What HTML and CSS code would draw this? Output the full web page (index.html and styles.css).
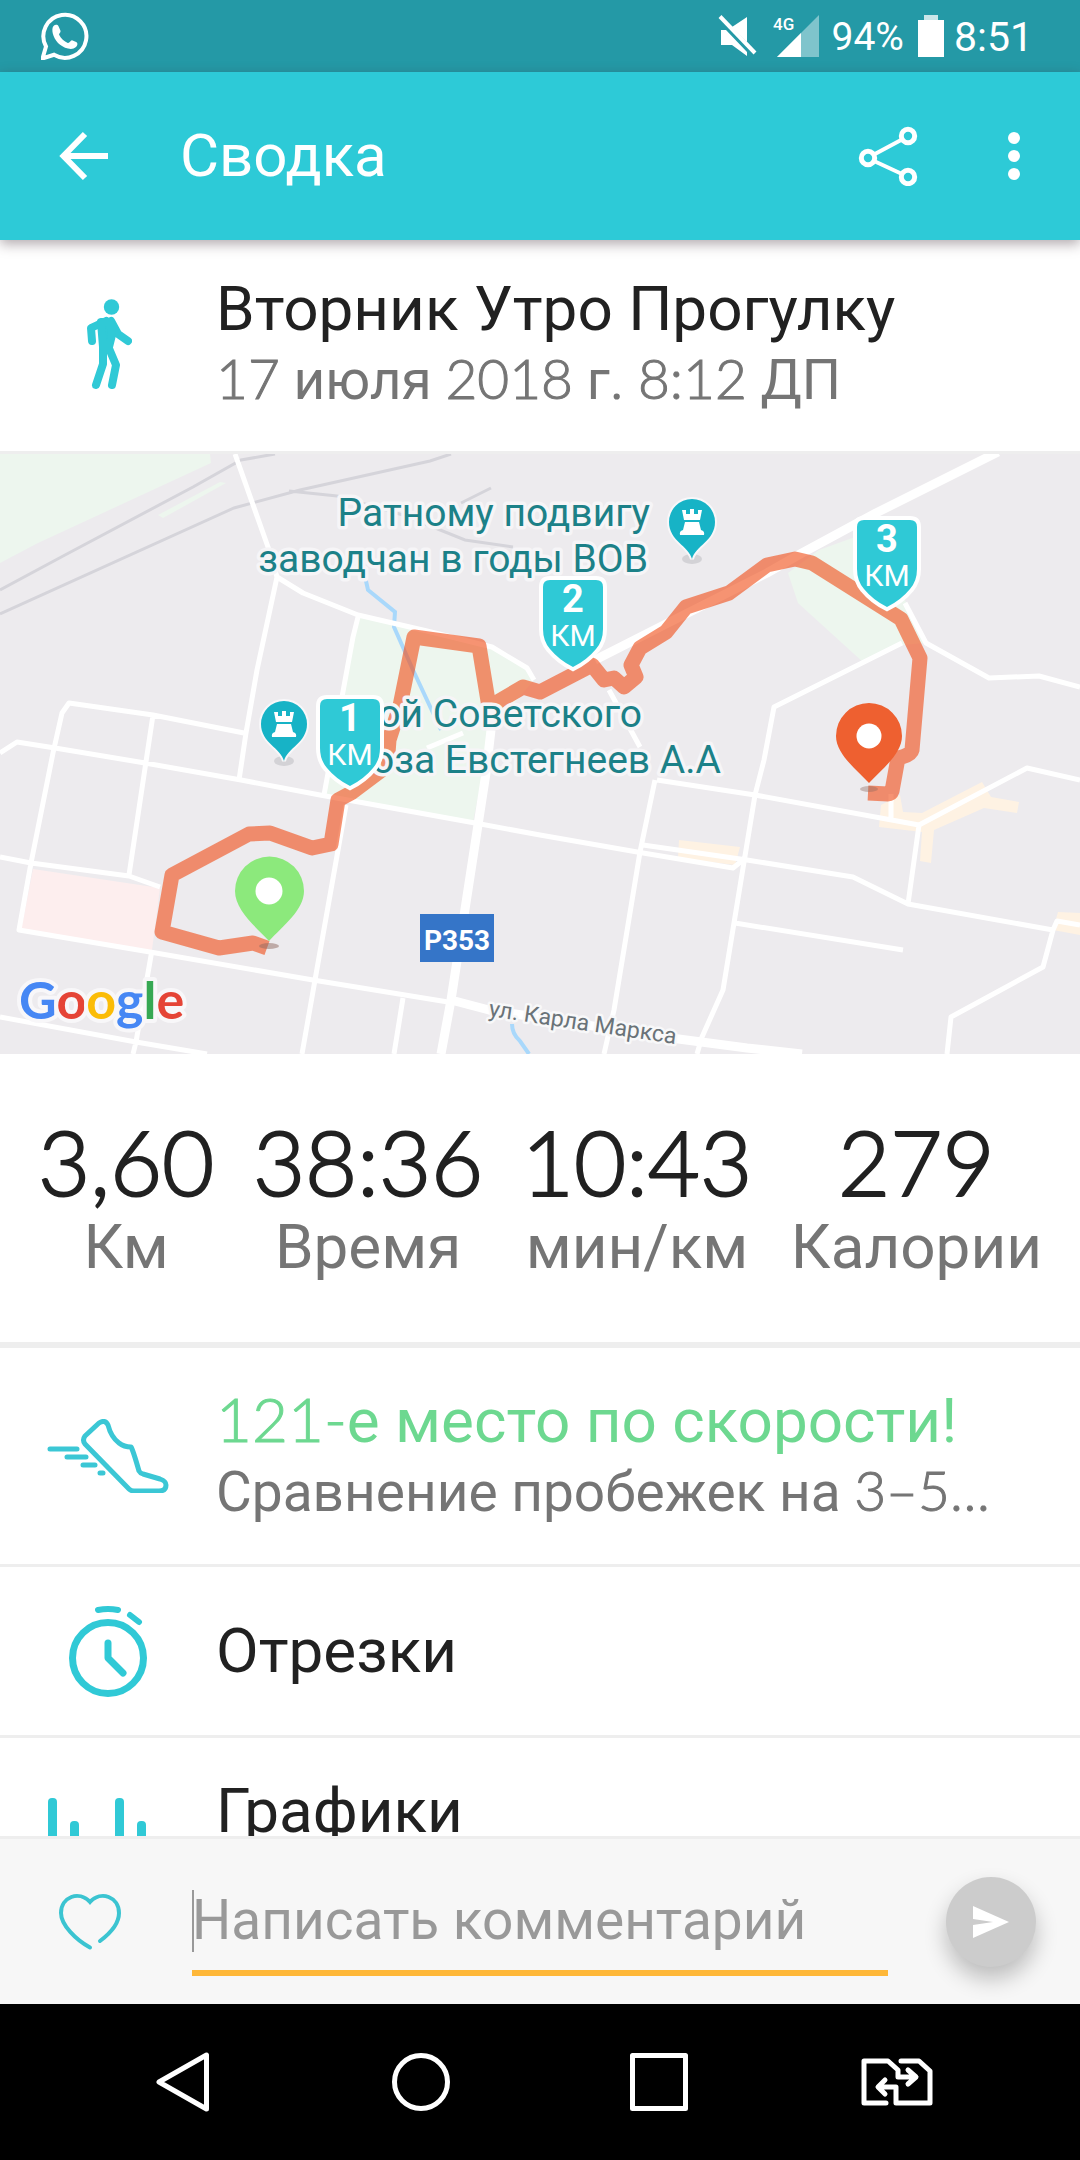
FILE: index.html
```html
<!DOCTYPE html>
<html lang="ru">
<head>
<meta charset="utf-8">
<meta name="viewport" content="width=device-width, initial-scale=1">
<title>Сводка</title>
<link rel="stylesheet" href="styles.css">
</head>
<body>
<div class="status">
  <svg class="status-app" width="48" height="48" viewBox="0 0 48 48" aria-label="WhatsApp"><path d="M1.500 46.500 5 34.500A21.500 21.500 0 1 1 13 42.800Z" fill="none" stroke="#fff" stroke-width="4" stroke-linejoin="miter"/><path d="M12.500 14c1.500-1.500 4-1.700 5 .2l2 4.500c.6 1.600-1.900 3-1.400 4.100 2 4 5 6.600 8.700 8.200 1.600.6 2.600-2.800 4.200-2.700l4.200 1.800c2 1 1.200 3.800-.2 5-2.200 1.900-5 2.400-8 1.500C19 34.500 13.500 28.500 11.800 21.500c-.6-2.800-.8-5.800.7-7.500Z" fill="#fff"/></svg>
  <svg class="status-mute" width="40" height="42" viewBox="0 0 40 42" aria-label="Без звука"><path d="M14 12 29 2v25ZM3 15h5l21 22v4L14 30H3Z" fill="#fff"/><path d="M2 1.500 37 38" stroke="#fff" stroke-width="4"/></svg>
  <svg class="status-signal" width="46" height="42" viewBox="0 0 46 42" aria-label="Сигнал 4G"><path d="M46 0v42H4Z" fill="#7fc4cc"/><path d="M28 18v24H4Z" fill="#fff"/><text x="0" y="15" class="network">4G</text></svg>
  <span class="status-percent">94%</span>
  <svg class="status-battery" width="26" height="42" viewBox="0 0 26 42" aria-label="Батарея"><path d="M6 0h14v5H6Z" fill="#c9e6e9"/><path d="M0 5h26v37H0Z" fill="#fff"/></svg>
  <span class="status-time">8:51</span>
</div>

<header class="appbar">
  <button class="icon-button" aria-label="Назад"><svg width="50" height="50" viewBox="0 0 50 50"><path d="M26 3 4.500 25 26 47M5 25h44" fill="none" stroke="#fff" stroke-width="6"/></svg></button>
  <h1 class="appbar-title">Сводка</h1>
  <button class="icon-button" aria-label="Поделиться"><svg width="60" height="60" viewBox="0 0 60 60" fill="none" stroke="#fff" stroke-width="5"><circle cx="50" cy="10" r="6.700"/><circle cx="10" cy="32" r="6.700"/><circle cx="50" cy="51" r="6.700"/><path stroke-width="4" d="m16 28.500 28-15M16 35l28 13"/></svg></button>
  <button class="icon-button" aria-label="Ещё"><svg width="12" height="48" viewBox="0 0 12 48" fill="#fff"><circle cx="6" cy="6" r="6"/><circle cx="6" cy="24" r="6"/><circle cx="6" cy="42" r="6"/></svg></button>
</header>

<main class="content">
  <section class="row row-activity">
    <div class="row-icon"><svg width="48" height="92" viewBox="0 0 48 92" fill="none" stroke="#30c9d6" stroke-width="8" stroke-linecap="round" stroke-linejoin="round"><circle cx="27.500" cy="9" r="7.700" fill="#30c9d6" stroke="none"/><path d="M8 43 7 30 22 23M27 23l7 13 10 7M19 48v18L12 87M24 48l8 19-4 20"/><path d="M17 24h9l2 13-3 12h-6Z" fill="#30c9d6"/></svg></div>
    <div class="row-text">
      <h2 class="row-title">Вторник Утро Прогулку</h2>
      <p class="row-sub"><span class="num">17</span> июля <span class="num">2018</span> г. <span class="num">8:12</span> ДП</p>
    </div>
  </section>

  <svg class="map" viewBox="0 0 1080 600" preserveAspectRatio="xMidYMid slice" role="img" aria-label="Карта маршрута">
    <defs>
      <g id="shield"><path d="M7 0h46q7 0 7 7v42q0 12-7 20-9 11-23 18Q16 80 7 69 0 61 0 49V7Q0 0 7 0Z" fill="#2fc9d6" stroke="#fff" stroke-width="8" paint-order="stroke"/></g>
      <g id="rook-pin"><ellipse cx="23" cy="60" rx="10" ry="5" fill="#d3d2d6"/><path d="M23 60C20 47 0 42 0 23a23 23 0 0 1 46 0c0 19-20 24-23 37Z" fill="#17b3c6" stroke="#f8f7f9" stroke-width="4" paint-order="stroke"/><path d="M13 11h4v4h4v-5h4v5h4v-4h4l-2 10H15ZM16 23h14l2 8q4 1 3 5H11q-1-4 3-5Z" fill="#fff"/></g>
    </defs>
    <rect width="1080" height="600" fill="#edebee"/>
    <g fill="#edf6ee">
      <path d="M0 0h210l1 9L38 89 0 109ZM220 28l6 1-63 35-5-3ZM358 163l69 14 65 16 35 21 7 12-43 50-18 92-149-27 29-158ZM788 119l31-23 36-13 50 63 19 43-22 2-38 18-66-60Z"/>
    </g>
    <path d="m33 415 127 19-8 62-131-20Z" fill="#fdeeee"/>
    <path d="m679 386 61 7-5 18-57-7ZM879 373l2-22 19-10 3 17 19 1 60-31 9 15 28 5-2 11-33-5-50 22-3 33-11-2 2-29ZM1058 458l22 1v22l-27-5Z" fill="#fef2e3"/>
    <g fill="none" stroke="#d5d4da" stroke-width="3">
      <path d="m0 136 65-35L193 33l48-27 34-6M0 160 234 54l66-18L430 7l21-7M289 37l48 5 66 19 62 25 48 7M461 49l30-15"/>
    </g>
    <path d="m362 109 6 27 27 22-1 15 19 43 28 60M512 570q0 10 8 17l9 13" fill="none" stroke="#a9d8fb" stroke-width="4"/>
    <g fill="none" stroke="#fff" stroke-width="5" stroke-linejoin="round">
      <path d="m235 0 33 93 9 30-20 93-11 63-7 47M277 123l26 16 55 22 69 16 65 16 35 21 7 12M358 163l-5 20-29 158"/>
      <path d="m0 299 17-11 38 6 90 15 96 17 79 15 155 28 65 12 103 18 90 15 10-8M31 409l22-110 9-40 7-10 84 12 91 18M153 261l-24 160M0 403l31 6 98 13 31 11M31 409l-12 67 131 22 163 28 135 22M346 351l-31 175-13 74M152 496l-16 92-3 12M0 563l136 25 71 12M403 544l-9 56M463 279l-36 15"/>
      <path d="m655 326-15 72-26 158-10 44M657 326l98 15 164 30 108-57 53 12M902 189l-128 64-10 53-9 35-32 195-21 47-5 17M905 149l21 40 63 35 50-2 41 11M643 391l104 15 106 17 55 27 145 26 4-9 23 4M919 371l-11 79M735 469l168 27M1053 476l-10 37-92 50-4 37M891 340v26M609 236l31 57"/>
    </g>
    <g fill="none" stroke="#fff" stroke-width="9" stroke-linejoin="round">
      <path d="m998-2-122 61-74 40-35 20-107 54-65 33M491 276l-5 43-35 227-10 54M451 546l38 10 182 28 76 10 55 6"/>
    </g>
    <path d="m267 494-14-5-34 5-57-16 10-57 77-41 21-1 42 15 19-4 7-44 13-7 36-27 2-26 11-34 14-69 65 9 10 61 34-20 17 5 52-27 12 15 10-2 10 9 12-10-5-12 9-17 26-16 20-25 43-14 38-28 28-6 17 4 89 56 19 39-8 92q-1 5-14 8l-6 33q-1 3-4 3l-20-1" fill="none" stroke="#f0511b" stroke-opacity=".62" stroke-width="15" stroke-linejoin="round"/>

    <g class="place">
      <text x="650" y="72" text-anchor="end">Ратному подвигу</text>
      <text x="648" y="118" text-anchor="end">заводчан в годы ВОВ</text>
      <text x="642" y="273" text-anchor="end">ой Советского</text>
      <text x="721" y="319" text-anchor="end">оза Евстегнеев А.А</text>
    </g>
    <text class="street" transform="translate(488 562) rotate(8.500)">ул. Карла Маркса</text>
    <use href="#rook-pin" x="669" y="45"/>
    <use href="#rook-pin" x="261" y="247"/>

    <g class="marker">
      <use href="#shield" x="320" y="245"/><text class="marker-num" x="350" y="277">1</text><text x="350" y="311">КМ</text>
      <use href="#shield" x="543" y="126"/><text class="marker-num" x="573" y="158">2</text><text x="573" y="192">КМ</text>
      <use href="#shield" x="857" y="66"/><text class="marker-num" x="887" y="98">3</text><text x="887" y="132">КМ</text>
    </g>

    <ellipse cx="269" cy="492" rx="10" ry="3" fill="#8f6a60" fill-opacity=".5"/>
    <path d="M269 487c-14-15-34-31-34-50a34 34 0 0 1 69 0c0 19-21 35-35 50Z" fill="#8ce97c"/><circle cx="269" cy="437" r="13.500" fill="#fff"/>
    <ellipse cx="869" cy="335" rx="9" ry="3" fill="#8f6a60" fill-opacity=".4"/>
    <path d="M869 329c-13-14-33-29-33-47a33 33 0 0 1 66 0c0 18-20 33-33 47Z" fill="#ee6030"/><circle cx="869" cy="282" r="12.500" fill="#fff"/>

    <rect x="420" y="460" width="74" height="48" fill="#3575c8"/>
    <text class="route-number" x="457" y="496">Р353</text>
    <text class="google" x="19" y="565"><tspan fill="#4687f4">G</tspan><tspan fill="#e54436">o</tspan><tspan fill="#fbbc07">o</tspan><tspan fill="#4687f4">g</tspan><tspan fill="#36a853">l</tspan><tspan fill="#e54436">e</tspan></text>
  </svg>

  <dl class="stats">
    <div class="stat"><dt>Км</dt><dd>3,60</dd></div>
    <div class="stat"><dt>Время</dt><dd>38:36</dd></div>
    <div class="stat"><dt>мин/км</dt><dd>10:43</dd></div>
    <div class="stat"><dt>Калории</dt><dd>279</dd></div>
  </dl>

  <a class="row" href="#rank">
    <span class="row-icon"><svg width="122" height="74" viewBox="0 0 122 74" fill="none" stroke="#3bc7d5" stroke-width="5" stroke-linecap="round" stroke-linejoin="round"><path d="M52 4q6-4 9 2 3 12 11 18 5 4 12 4 2 3 8 24 1 2 4 3l17 5q6 2 6 6 0 6-7 6H87q-3 0-5-2L38 25q-3-4 0-8ZM3 30h27M20 38h19M36 46h12M53 54h3"/></svg></span>
    <span class="row-text">
      <span class="row-title row-title-rank"><span class="num">121-</span>е место по скорости!</span>
      <span class="row-sub">Сравнение пробежек на <span class="num">3–5…</span></span>
    </span>
  </a>
  <a class="row row-single" href="#splits">
    <span class="row-icon"><svg width="78" height="94" viewBox="0 0 78 94" fill="none" stroke="#30c9d6" stroke-width="7" stroke-linecap="round" stroke-linejoin="round"><circle cx="39" cy="54" r="35.500"/><path d="M39 39v15l15 15" /><path d="M29 6q10-2 20 0M61 11l9 7" stroke-width="6"/></svg></span>
    <span class="row-text"><span class="row-title">Отрезки</span></span>
  </a>
  <a class="row" href="#charts">
    <span class="row-icon"><svg width="120" height="96" viewBox="0 0 120 96" fill="#30c9d6"><rect width="9" height="96" rx="4"/><rect x="22" y="23" width="9" height="73" rx="4"/><rect x="45" y="46" width="9" height="50" rx="4"/><rect x="67" width="9" height="96" rx="4"/><rect x="89" y="23" width="9" height="73" rx="4"/><rect x="111" y="58" width="9" height="38" rx="4"/></svg></span>
    <span class="row-text row-text-tall"><span class="row-title">Графики</span></span>
  </a>
</main>

<form class="comment">
  <button type="button" class="like" aria-label="Нравится"><svg width="64" height="58" viewBox="0 0 64 58" fill="none" stroke="#3bc4d1" stroke-width="4" stroke-linecap="round"><path d="M32 54.500C18 47 3 32 3 20 3 4 21-3 32 9 43-3 61 4 61 20c0 9-7 19-19 28"/></svg></button>
  <div class="field"><span class="caret"></span><input class="comment-input" type="text" placeholder="Написать комментарий" aria-label="Написать комментарий"></div>
  <button type="button" class="send" aria-label="Отправить"><svg width="38" height="34" viewBox="0 0 38 34"><path d="M1 1 37 17 1 33V20l20-3-20-3Z" fill="#fff"/></svg></button>
</form>

<nav class="navbar">
  <button aria-label="Назад"><svg width="58" height="60" viewBox="0 0 58 60"><path d="M52.500 3v54L5 30Z" fill="none" stroke="#fff" stroke-width="5" stroke-linejoin="round"/></svg></button>
  <button aria-label="Домой"><svg width="60" height="60" viewBox="0 0 60 60"><circle cx="30" cy="30" r="26.500" fill="none" stroke="#fff" stroke-width="5"/></svg></button>
  <button aria-label="Недавние"><svg width="60" height="60" viewBox="0 0 60 60"><rect x="3.500" y="3.500" width="53" height="53" fill="none" stroke="#fff" stroke-width="5" stroke-linejoin="round"/></svg></button>
  <button aria-label="Сменить SIM"><svg width="72" height="48" viewBox="0 0 72 48" fill="none" stroke="#fff" stroke-width="5" stroke-linecap="round" stroke-linejoin="round"><path d="M25 45H3V3h24l10 9v7h17M47 12l8 7-8 7M40 3h18l11 10v32H35V29H18M24 22l-7 7 7 7"/></svg></button>
</nav>
</body>
</html>
```
FILE: styles.css
```css
* {
  box-sizing: border-box;
  margin: 0;
  padding: 0;
}

body {
  display: flex;
  flex-direction: column;
  height: 100vh;
  background: #fff;
  color: #212121;
  font-family: Roboto, "Noto Sans", sans-serif;
}

svg {
  display: block;
  flex: none;
}

button {
  display: flex;
  align-items: center;
  justify-content: center;
  border: 0;
  background: none;
}

/* Status bar */
.status {
  display: flex;
  flex: none;
  align-items: center;
  height: 72px;
  padding: 0 47px 0 41px;
  background: #2499a6;
  color: #fff;
}

.status-app {
  margin-right: auto;
}

.status-signal {
  margin: 0 13px 0 15px;
}

.network {
  fill: #fff;
  font-size: 17px;
  font-weight: 500;
}

.status-percent {
  padding-top: 2px;
  font-size: 39px;
}

.status-battery {
  margin: 0 10px 0 14px;
}

.status-time {
  padding-top: 2px;
  font-size: 41px;
}

/* App bar */
.appbar {
  display: flex;
  flex: none;
  align-items: center;
  height: 168px;
  padding: 0 18px 0 12px;
  background: #2dcad7;
  box-shadow: 0 4px 12px rgba(60, 40, 50, 0.4);
  position: relative;
  z-index: 1;
}

.icon-button {
  width: 144px;
  height: 144px;
}

.icon-button:last-child {
  width: 96px;
}

.icon-button:nth-last-child(2) {
  width: 156px;
}

.appbar-title {
  flex: 1;
  padding-left: 24px;
  color: #fff;
  font-size: 60px;
  font-weight: 400;
  line-height: 72px;
}

/* Scrolling content */
.content {
  flex: 1;
  min-height: 0;
  overflow: hidden;
}

.row {
  display: flex;
  align-items: center;
  min-height: 219px;
  border-bottom: 3px solid #eee;
  color: inherit;
  text-decoration: none;
}

.row-activity {
  min-height: 214px;
  padding-bottom: 4px;
}

.row-single {
  min-height: 171px;
}

.row-icon {
  display: flex;
  flex: none;
  justify-content: center;
  width: 216px;
}

.row-text {
  flex: 1;
  min-width: 0;
}

.row-text-tall {
  min-height: 142px;
}

.row-title,
.row-sub {
  display: block;
  white-space: nowrap;
  font-weight: 400;
}

.row-title {
  font-size: 62px;
  line-height: 72px;
}

.row-title-rank {
  color: #6dd890;
}

.row-sub {
  color: #757575;
  font-size: 55px;
  line-height: 70px;
}

.num {
  font-family: Lato, sans-serif;
  font-weight: 300;
  line-height: 1;
  -webkit-text-stroke: 1px currentColor;
}

/* Map */
.map {
  width: 100%;
  height: 600px;
}

.place {
  fill: #1c8188;
  stroke: #f6f5f7;
  stroke-width: 7px;
  stroke-linejoin: round;
  paint-order: stroke;
  font-size: 39px;
}

.street {
  fill: #6a7378;
  stroke: #f8f8f9;
  stroke-width: 5px;
  stroke-linejoin: round;
  paint-order: stroke;
  font-size: 23px;
}

.marker {
  fill: #fff;
  font-size: 30px;
  text-anchor: middle;
}

.marker-num {
  font-size: 38px;
  font-weight: 700;
}

.route-number {
  fill: #fff;
  font-size: 28px;
  font-weight: 700;
  text-anchor: middle;
}

.google {
  stroke: #f8f7f9;
  stroke-width: 8px;
  stroke-linejoin: round;
  paint-order: stroke;
  font-family: Lato, sans-serif;
  font-size: 52px;
  font-weight: 700;
}

/* Totals */
.stats {
  display: flex;
  justify-content: space-between;
  height: 294px;
  padding: 57px 38px 0;
  border-bottom: 6px solid #eee;
}

.stat {
  display: flex;
  flex-direction: column-reverse;
  justify-content: flex-end;
  text-align: center;
}

.stat dt {
  color: #757575;
  font-size: 62px;
  line-height: 72px;
}

.stat dd {
  font-family: Lato, sans-serif;
  font-size: 90px;
  font-weight: 300;
  line-height: 100px;
  -webkit-text-stroke: 2px currentColor;
}

/* Comment bar */
.comment {
  display: flex;
  flex: none;
  align-items: center;
  height: 168px;
  padding-right: 44px;
  border-top: 3px solid #eee;
  background: #f7f7f7;
}

.like {
  width: 180px;
  height: 144px;
}

.field {
  position: relative;
  flex: 1;
  margin: 12px 58px 0 12px;
}

.caret {
  position: absolute;
  top: 10px;
  left: 0;
  width: 2px;
  height: 62px;
  background: #999;
}

.comment-input {
  display: block;
  width: 100%;
  height: 96px;
  padding: 0 0 10px;
  border: 0;
  border-bottom: 6px solid #feb738;
  outline: 0;
  background: none;
  color: #212121;
  font: 55px Roboto, "Noto Sans", sans-serif;
}

.comment-input::placeholder {
  color: #999;
  opacity: 1;
}

.send {
  width: 90px;
  height: 90px;
  border-radius: 50%;
  background: #ccc;
  box-shadow: 0 12px 22px rgba(0, 0, 0, 0.24);
}

/* System navigation */
.navbar {
  display: grid;
  flex: none;
  grid-template-columns: repeat(4, 1fr);
  height: 156px;
  padding: 0 64px;
  background: #000;
}
```
